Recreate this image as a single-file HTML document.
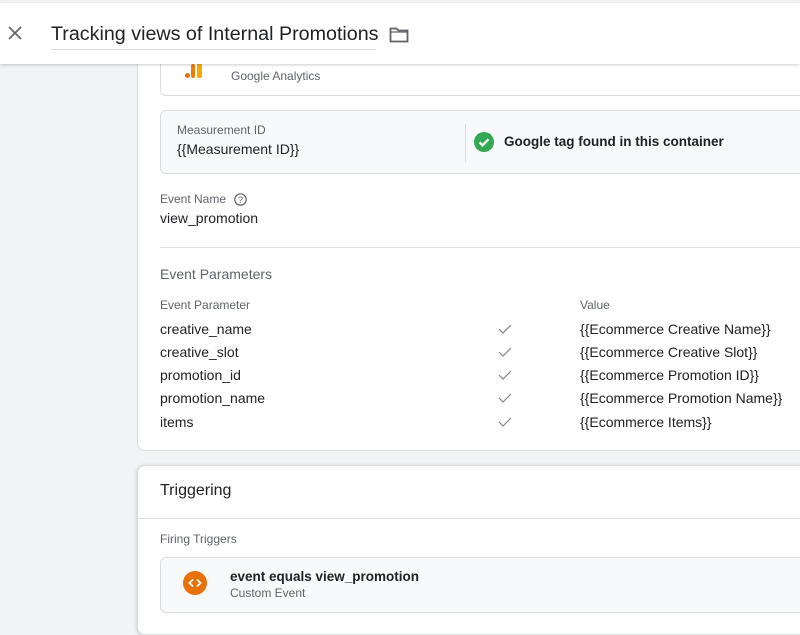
<!DOCTYPE html>
<html><head><style>
*{margin:0;padding:0;box-sizing:border-box}
body{width:800px;height:619px;overflow:hidden;background:#f1f3f4;font-family:"Liberation Sans",Arial,sans-serif;color:#202124;position:relative}
.abs{position:absolute;white-space:nowrap}
.hdr{position:absolute;left:0;top:3px;width:800px;height:61px;background:#fff;box-shadow:0 1px 3px rgba(0,0,0,.2);z-index:5}
.card{position:absolute;left:137px;width:680px;background:#fff;border:1px solid #dadce0;border-radius:8px}
.lbl{font-size:12px;color:#5f6368}
.t{font-size:14px;color:#202124}
</style></head><body>
<div class="hdr">
<svg class="abs" style="left:8px;top:23px" width="14" height="14" viewBox="0 0 14 14"><path d="M1 1L13 13M13 1L1 13" stroke="#5f6368" stroke-width="1.6"/></svg>
<div class="abs" style="left:51px;top:20px;font-size:19.7px;color:#202124">Tracking views of Internal Promotions</div>
<div class="abs" style="left:51px;top:46px;width:325px;height:1px;background:#dadce0"></div>
<svg class="abs" style="left:389px;top:24px" width="20" height="16" viewBox="0 0 20 16"><path d="M1.5 1.5h6l2 2h9v11h-17z" fill="none" stroke="#5f6368" stroke-width="1.8"/><path d="M1.5 5h17" stroke="#5f6368" stroke-width="1.3"/></svg>
</div>
<div class="card" style="top:20px;height:431px">
  <div class="abs" style="left:22px;top:20px;width:660px;height:55px;border:1px solid #dadce0;border-radius:6px"></div>
  <div class="abs" style="left:53px;top:43px;width:4px;height:14px;background:#f57c00;border-radius:2px"></div>
  <div class="abs" style="left:59px;top:40px;width:5px;height:17px;background:#f9ab00;border-radius:2px"></div>
  <div class="abs" style="left:47px;top:52px;width:5px;height:5px;background:#e8710a;border-radius:50%"></div>
  <div class="abs" style="left:93px;top:48px;font-size:12px;color:#5f6368">Google Analytics</div>
  <div class="abs" style="left:22px;top:89px;width:660px;height:64px;background:#f8f9fa;border:1px solid #dadce0;border-radius:6px"></div>
  <div class="abs lbl" style="left:39px;top:102px">Measurement ID</div>
  <div class="abs t" style="left:39px;top:120px">{{Measurement ID}}</div>
  <div class="abs" style="left:327px;top:103px;width:1px;height:38px;background:#dadce0"></div>
  <svg class="abs" style="left:336px;top:111px" width="20" height="20" viewBox="0 0 20 20"><circle cx="10" cy="10" r="10" fill="#34a853"/><path d="M5.5 10.3l3 3 6-6" fill="none" stroke="#fff" stroke-width="2.2"/></svg>
  <div class="abs" style="left:366px;top:113px;font-size:13.5px;font-weight:bold;color:#202124">Google tag found in this container</div>
  <div class="abs lbl" style="left:22px;top:171px">Event Name</div>
  <svg class="abs" style="left:96px;top:172px" width="13" height="13" viewBox="0 0 13 13"><circle cx="6.5" cy="6.5" r="5.7" fill="none" stroke="#5f6368" stroke-width="1.2"/><text x="6.5" y="9.8" font-size="9" text-anchor="middle" fill="#5f6368" font-family="Liberation Sans">?</text></svg>
  <div class="abs t" style="left:22px;top:189px">view_promotion</div>
  <div class="abs" style="left:22px;top:226px;width:660px;height:1px;background:#e0e0e0"></div>
  <div class="abs" style="left:22px;top:245px;font-size:14px;color:#5f6368">Event Parameters</div>
  <div class="abs lbl" style="left:22px;top:277px">Event Parameter</div>
  <div class="abs lbl" style="left:442px;top:277px">Value</div>
  <div class="abs t" style="left:22px;top:300px">creative_name</div><div class="abs t" style="left:442px;top:300px">{{Ecommerce Creative Name}}</div>
  <div class="abs t" style="left:22px;top:323px">creative_slot</div><div class="abs t" style="left:442px;top:323px">{{Ecommerce Creative Slot}}</div>
  <div class="abs t" style="left:22px;top:346px">promotion_id</div><div class="abs t" style="left:442px;top:346px">{{Ecommerce Promotion ID}}</div>
  <div class="abs t" style="left:22px;top:369px">promotion_name</div><div class="abs t" style="left:442px;top:369px">{{Ecommerce Promotion Name}}</div>
  <div class="abs t" style="left:22px;top:393px">items</div><div class="abs t" style="left:442px;top:393px">{{Ecommerce Items}}</div>
  <svg class="abs" style="left:360px;top:303px" width="14" height="110" viewBox="0 0 14 110"><g fill="none" stroke="#80868b" stroke-width="1.2"><path d="M1 5l4 4 8-8"/><path d="M1 28l4 4 8-8"/><path d="M1 51l4 4 8-8"/><path d="M1 74l4 4 8-8"/><path d="M1 98l4 4 8-8"/></g></svg>
</div>
<div class="card" style="top:465px;height:170px;box-shadow:0 1px 4px rgba(0,0,0,.2)">
  <div class="abs" style="left:22px;top:16px;font-size:16px;color:#202124">Triggering</div>
  <div class="abs" style="left:0;top:52px;width:680px;height:1px;background:#e0e0e0"></div>
  <div class="abs lbl" style="left:22px;top:66px">Firing Triggers</div>
  <div class="abs" style="left:22px;top:91px;width:660px;height:56px;background:#f8f9fa;border:1px solid #dadce0;border-radius:6px"></div>
  <svg class="abs" style="left:45px;top:105px" width="24" height="24" viewBox="0 0 24 24"><circle cx="12" cy="12" r="12" fill="#e8710a"/><path d="M10 8.5l-3.5 3.5 3.5 3.5M14 8.5l3.5 3.5-3.5 3.5" fill="none" stroke="#fff" stroke-width="1.8"/></svg>
  <div class="abs" style="left:92px;top:103px;font-size:13.5px;font-weight:bold;color:#202124">event equals view_promotion</div>
  <div class="abs lbl" style="left:92px;top:120px">Custom Event</div>
</div>
</body></html>
